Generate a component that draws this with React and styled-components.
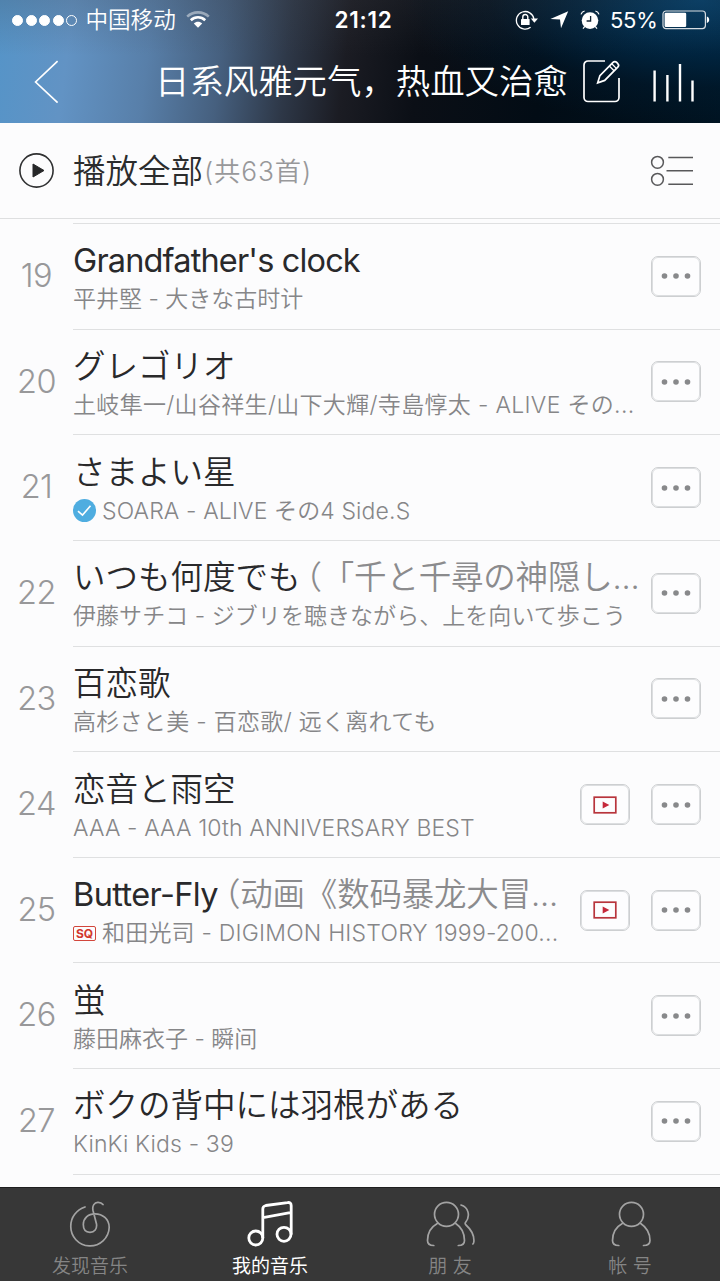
import React from 'react'
import styled, { createGlobalStyle } from 'styled-components';

const GlobalStyle = createGlobalStyle`
    * {
        box-sizing: border-box;
    }
    body {
        margin: 0;
        background: #fcfcfd;
        font-family: Inter, "Noto Sans CJK SC", sans-serif;
        text-spacing-trim: space-all;
    }
    svg {
        display: block;
        flex: none;
    }
`

const Screen = styled.div`
    width: 720px;
    height: 1281px;
    display: flex;
    flex-direction: column;
    overflow: hidden;
    background: #fcfcfd;
`

const Header = styled.header`
    height: 123px;
    flex: none;
    color: #fff;
    background:
        linear-gradient(180deg, rgba(60, 62, 68, 0.2) 0%, rgba(60, 62, 68, 0) 45%),
        radial-gradient(ellipse 300px 125px at 700px 0, #003f6c 0%, rgba(0, 48, 84, 0.65) 40%, rgba(0, 38, 68, 0.25) 70%, rgba(0, 30, 55, 0) 100%),
        linear-gradient(97deg, #5594c8 0%, #6293c4 10%, #587fa9 21%, #46607f 31%, #2e3848 40%, #1b1c23 48%, #0b0f16 58%, #020c15 75%, #001321 100%);
`

const StatusBar = styled.div`
    display: flex;
    align-items: center;
    height: 40px;
    padding: 0 10px 0 12px;
`

const Signal = styled.div`
    display: flex;
    gap: 2.6px;
`

const Dot = styled.span`
    width: 11px;
    height: 11px;
    border-radius: 50%;
    border: 1px solid #fff;
    background: ${({ $on }) => ($on ? '#fff' : 'transparent')};
`

const Carrier = styled.span`
    width: 101px;
    margin-left: 8px;
    font-size: 22.6px;
    font-weight: 350;
    line-height: 30px;
    white-space: nowrap;
`

const Clock = styled.span`
    width: 62px;
    margin-left: 124px;
    font-size: 22.5px;
    font-weight: 600;
    line-height: 30px;
    letter-spacing: 0.8px;
    white-space: nowrap;
`

const StatusIcons = styled.div`
    display: flex;
    align-items: center;
    gap: 11px;
    margin-left: auto;
`

const Percent = styled.span`
    width: 41px;
    margin-left: -1px;
    font-size: 22px;
    line-height: 30px;
    letter-spacing: -0.3px;
`

const NavBar = styled.div`
    display: flex;
    align-items: center;
    height: 83px;
    padding: 0 25px 0 34px;
`

const NavTitle = styled.h1`
    width: 428px;
    margin: 1px 0 0 95px;
    font-size: 34.4px;
    font-weight: 350;
    line-height: 44px;
    white-space: nowrap;
`

const NavActions = styled.div`
    display: flex;
    flex: 1;
    justify-content: space-between;
    align-items: center;
`

const PlayAllBar = styled.div`
    display: flex;
    align-items: center;
    height: 96px;
    flex: none;
    padding: 0 26px 0 18px;
    border-bottom: 1px solid #dedfe0;
`

const PlayAll = styled.span`
    margin: 2px 0 0 18px;
    font-size: 32.5px;
    font-weight: 350;
    line-height: 44px;
    color: #2b2c2d;
`

const Count = styled.span`
    margin: 2px 0 0 1px;
    flex: 1;
    font-size: 26.3px;
    font-weight: 350;
    line-height: 44px;
    letter-spacing: 0.9px;
    color: #98989a;
`

const List = styled.main`
    flex: 1;
    min-height: 0;
    padding-top: 4px;
    overflow: hidden;
`

const Row = styled.div`
    display: flex;
    height: 105.65px;
`

const Index = styled.div`
    width: 73px;
    flex: none;
    font-size: 32.5px;
    font-weight: 350;
    line-height: 106px;
    letter-spacing: -0.5px;
    text-align: center;
    color: #98989a;
`

const RowBody = styled.div`
    display: flex;
    flex: 1;
    min-width: 0;
    align-items: center;
    padding-right: 19px;
    border-top: 1px solid #dfe0e1;
`

const Texts = styled.div`
    flex: 1;
    min-width: 0;
    padding-top: 6px;
`

const Line = styled.div`
    display: flex;
    align-items: center;
    white-space: pre;
    letter-spacing: ${({ $track }) => $track || 0}px;
`

const Title = styled(Line)`
    height: 40px;
    font-size: 32.5px;
    font-weight: ${({ $latin }) => ($latin ? 400 : 350)};
    line-height: 40px;
    color: #29292b;
`

const Alias = styled.span`
    margin-left: ${({ $shift }) => $shift || 0}px;
    font-weight: 350;
    color: #8b8b8d;
    letter-spacing: -0.2px;
`

const Artist = styled(Line)`
    height: 36px;
    font-size: 23px;
    font-weight: 350;
    line-height: 36px;
    color: #868688;
`

const BadgeSlot = styled.span`
    width: 29px;
    flex: none;
`

const SqBadge = styled.span`
    display: flex;
    align-items: center;
    justify-content: center;
    width: 23px;
    height: 15px;
    border: 1px solid #d2463c;
    border-radius: 2px;
    font-size: 12px;
    font-weight: 700;
    line-height: 13px;
    letter-spacing: 0;
    color: #d2382d;
`

const IconButton = styled.button`
    display: flex;
    align-items: center;
    justify-content: center;
    width: 50px;
    height: 41px;
    flex: none;
    margin-left: ${({ $gap }) => $gap || 0}px;
    padding: 0;
    background: #fdfdfe;
    border: 1.5px solid #cdcfd1;
    outline: 0.5px solid #dcdee0;
    outline-offset: -2px;
    border-radius: 7px;
`

const EndLine = styled.div`
    height: 1px;
    margin-left: 73px;
    background: #dfe0e1;
`

const TabBar = styled.nav`
    display: grid;
    grid-template-columns: repeat(4, 1fr);
    height: 94px;
    flex: none;
    background: #373737;
    border-top: 1px solid #1f1f1f;
`

const Tab = styled.div`
    display: flex;
    flex-direction: column;
    align-items: center;
    padding-top: 13px;
    color: ${({ $active }) => ($active ? '#fff' : '#a3a3a3')};
`

const TabLabel = styled.span`
    margin-top: 7px;
    font-size: 19px;
    font-weight: ${({ $active }) => ($active ? 400 : 350)};
    line-height: 26px;
    white-space: pre;
    color: ${({ $active }) => ($active ? '#fff' : '#858585')};
`

const WifiIcon = () => (
    <svg width="24" height="18" viewBox="0 0 24 18" fill="none">
        <path d="M1.2 5.6C7.2 0 16.8 0 22.8 5.6" stroke="#fff" strokeOpacity=".45" strokeWidth="2.6" />
        <path d="M4.8 9.2C9 5.3 15 5.3 19.2 9.2" stroke="#fff" strokeWidth="2.6" />
        <path d="M12 16.8L7.8 12.5C10.2 10.3 13.8 10.3 16.2 12.5Z" fill="#fff" />
    </svg>
)

const LockIcon = () => (
    <svg width="24" height="20" viewBox="0 0 24 20" fill="none" stroke="#fff">
        <path d="M15.6 17.3A8.8 8.8 0 1 1 18.9 9" strokeWidth="1.3" />
        <path d="M15.8 8.6H23L19.4 12.8Z" fill="#fff" stroke="none" />
        <rect x="6" y="9" width="8.6" height="6" rx=".6" fill="#fff" stroke="none" />
        <path d="M7.8 9V7a2.5 2.5 0 0 1 5 0V9" strokeWidth="1.4" />
    </svg>
)

const ArrowIcon = () => (
    <svg width="19" height="18" viewBox="0 0 19 18">
        <path d="M18.2 .3L11 17.3L10 8.6L.4 8Z" fill="#fff" />
    </svg>
)

const AlarmIcon = () => (
    <svg width="20" height="20" viewBox="0 0 20 20" fill="none">
        <circle cx="10" cy="10.6" r="8.3" fill="#fff" />
        <path d="M10.6 6V11H6.6" stroke="#132535" strokeWidth="1.3" />
        <path d="M1 4.4C1.5 2.8 2.6 1.5 4.6 1M19 4.4C18.5 2.8 17.4 1.5 15.4 1M4.6 16.6L3 18.6M15.4 16.6L17 18.6" stroke="#fff" strokeWidth="1.2" />
    </svg>
)

const BatteryIcon = () => (
    <svg width="48" height="20" viewBox="0 0 48 20">
        <rect x="1" y="1" width="42.4" height="17.6" rx="3" fill="none" stroke="#d7dde2" strokeWidth="1.2" />
        <rect x="2.6" y="2.7" width="21.6" height="14.2" rx="1.2" fill="#fff" />
        <path d="M44.8 6.6C48 7.2 48 12.4 44.8 13Z" fill="#fff" />
    </svg>
)

const BackIcon = () => (
    <svg width="26" height="44" viewBox="0 0 26 44" fill="none">
        <path d="M23.6 1.2L1.6 22L23.6 42.6" stroke="#fff" strokeWidth="1.7" />
    </svg>
)

const EditIcon = () => (
    <svg width="39" height="44" viewBox="0 0 39 44" fill="none" stroke="#fff" strokeWidth="1.7">
        <path d="M22 1H5A4 4 0 0 0 1 5V37.5A4 4 0 0 0 5 41.5H32A4 4 0 0 0 36 37.5V18" />
        <path d="M14.7 22.8L16.9 15.6L30 2.4A2.6 2.6 0 0 1 33.7 2.4L34.8 3.6A2.6 2.6 0 0 1 34.8 7.2L21.7 20.4Z" />
        <path d="M26.3 6L31.3 11M28.8 3.7L33.5 8.6" strokeWidth="1.3" />
    </svg>
)

const PlayingIcon = () => (
    <svg width="42" height="44" viewBox="0 0 42 44" stroke="#fff" strokeWidth="2.4">
        <path d="M1.6 10.5V41.5M14.4 15V41.5M27 4V41.5M39.5 20.5V41.5" />
    </svg>
)

const PlayIcon = () => (
    <svg width="37" height="37" viewBox="0 0 37 37">
        <circle cx="18.5" cy="18.5" r="16.6" fill="none" stroke="#303132" strokeWidth="1.6" />
        <path d="M15 12L26 18.5L15 25Z" fill="#262728" stroke="#262728" strokeLinejoin="round" />
    </svg>
)

const SelectIcon = () => (
    <svg width="44" height="32" viewBox="0 0 44 32" fill="none" stroke="#58585a" strokeWidth="1.5">
        <circle cx="7.5" cy="7.3" r="5.9" />
        <circle cx="7.5" cy="24.3" r="5.9" />
        <path d="M18.3 2.4H43M16.5 15.7H43M18.3 29.2H43" />
    </svg>
)

const DotsIcon = () => (
    <svg width="30" height="8" viewBox="0 0 30 8" fill="#88898b">
        <circle cx="3.5" cy="4" r="2.8" />
        <circle cx="15" cy="4" r="2.8" />
        <circle cx="26.5" cy="4" r="2.8" />
    </svg>
)

const MvIcon = () => (
    <svg width="24" height="18" viewBox="0 0 24 18">
        <rect x="1.2" y="1.2" width="21.6" height="15.6" fill="none" stroke="#b8353c" strokeWidth="1.7" />
        <path d="M9.7 5.5L16.3 9L9.7 12.5Z" fill="#c5283a" />
    </svg>
)

const VerifiedIcon = () => (
    <svg width="24" height="24" viewBox="0 0 24 24">
        <circle cx="11.5" cy="11.5" r="11.5" fill="#4fade0" />
        <path d="M5 12.1L9.5 16.1L17.5 6.8" fill="none" stroke="#fff" strokeWidth="1.6" />
    </svg>
)

const DiscoverIcon = () => (
    <svg width="42" height="46" viewBox="0 0 42 46" fill="none" stroke="currentColor" strokeWidth="1.7" strokeLinecap="round">
        <path d="M16 6C7.5 9 1.8 16 1.8 25A19.2 19.2 0 0 0 40.2 26.5C40.2 18 33.5 12.8 26 12.8C19 12.8 14.3 17.5 14.3 23.5C14.3 28.5 17 31.3 21 31.3C25.5 31.3 28.2 28 27.5 23L24 9.5C23 4.5 25.5 1.5 28.8 1.3C31.3 1.2 33 2.2 34 3.5" />
    </svg>
)

const MusicIcon = () => (
    <svg width="46" height="46" viewBox="0 0 46 46" fill="none" stroke="currentColor" strokeWidth="2.8">
        <circle cx="8.8" cy="37" r="7" />
        <circle cx="37" cy="33.3" r="7" />
        <path d="M15.8 37V8C15.8 6 17 4.9 18.8 4.5L40.5 1.6C43 1.2 44.2 2.4 44.2 4.7V33.5M16 16.6L44.5 11.3" />
    </svg>
)

const FriendsIcon = () => (
    <svg width="50" height="46" viewBox="0 0 50 46" fill="none" stroke="currentColor" strokeWidth="1.7" strokeLinecap="round">
        <circle cx="21.5" cy="13.3" r="12" />
        <path d="M12.3 22.5C6 26 2.5 32.5 2.5 39.5C2.5 43 4.5 44.5 8.8 44.5M30.7 22.5C36 26 39.5 32.5 39.5 39.5C39.5 43 37.5 44.5 33.3 44.5M36 4C43 6 46 14.5 40.5 21.5C39.9 22.4 40.1 23.2 41 24C46 28.5 49.3 34 48.9 40.5C48.8 41.8 48.4 42.5 47.9 43" />
    </svg>
)

const AccountIcon = () => (
    <svg width="42" height="46" viewBox="0 0 42 46" fill="none" stroke="currentColor" strokeWidth="1.7" strokeLinecap="round">
        <circle cx="22.5" cy="13.3" r="12" />
        <path d="M13.3 22.5C7 26 3.5 32.5 3.5 39.5C3.5 43 5.5 44.5 9.8 44.5M31.7 22.5C37 26 41 32.5 41 39.5C41 43 39 44.5 34.5 44.5" />
    </svg>
)

const songs = [
    { id: 19, title: "Grandfather's clock", titleTrack: -0.85, latin: true, artist: '平井堅 - 大きな古时计' },
    { id: 20, title: 'グレゴリオ', artist: '土岐隼一/山谷祥生/山下大輝/寺島惇太 - ALIVE その...', artistTrack: 0.32 },
    { id: 21, title: 'さまよい星', artist: 'SOARA - ALIVE その4 Side.S', artistTrack: 0.12, badge: 'verified' },
    { id: 22, title: 'いつも何度でも', alias: '（「千と千尋の神隠し...', aliasShift: -11, artist: '伊藤サチコ - ジブリを聴きながら、上を向いて歩こう', artistTrack: 0.05 },
    { id: 23, title: '百恋歌', artist: '高杉さと美 - 百恋歌/ 远く离れても', artistTrack: 0.3 },
    { id: 24, title: '恋音と雨空', artist: 'AAA - AAA 10th ANNIVERSARY BEST', artistTrack: 0.1, mv: true },
    { id: 25, title: 'Butter-Fly', titleTrack: -0.6, latin: true, alias: '（动画《数码暴龙大冒...', aliasShift: -10, artist: '和田光司 - DIGIMON HISTORY 1999-200...', artistTrack: 0.2, badge: 'sq', mv: true },
    { id: 26, title: '蛍', artist: '藤田麻衣子 - 瞬间' },
    { id: 27, title: 'ボクの背中には羽根がある', artist: 'KinKi Kids - 39', artistTrack: 0.15 },
]

const tabs = [
    { label: '发现音乐', icon: <DiscoverIcon /> },
    { label: '我的音乐', icon: <MusicIcon />, active: true },
    { label: '朋 友', icon: <FriendsIcon /> },
    { label: '帐 号', icon: <AccountIcon /> },
]

function SongRow({ song }) {
    return (
        <Row>
            <Index>{song.id}</Index>
            <RowBody>
                <Texts>
                    <Title $track={song.titleTrack} $latin={song.latin}>
                        <span>{song.title}</span>
                        {song.alias && <Alias $shift={song.aliasShift}>{song.alias}</Alias>}
                    </Title>
                    <Artist $track={song.artistTrack}>
                        {song.badge &&
                            <BadgeSlot>
                                {song.badge === 'sq' ? <SqBadge>SQ</SqBadge> : <VerifiedIcon />}
                            </BadgeSlot>
                        }
                        <span>{song.artist}</span>
                    </Artist>
                </Texts>
                {song.mv && <IconButton><MvIcon /></IconButton>}
                <IconButton $gap={song.mv ? 21 : 0}><DotsIcon /></IconButton>
            </RowBody>
        </Row>
    )
}

export default function App() {
    return (
        <>
            <GlobalStyle />
            <Screen>
                <Header>
                    <StatusBar>
                        <Signal>
                            {[1, 2, 3, 4, 5].map((n) => <Dot key={n} $on={n < 5} />)}
                        </Signal>
                        <Carrier>中国移动</Carrier>
                        <WifiIcon />
                        <Clock>21:12</Clock>
                        <StatusIcons>
                            <LockIcon />
                            <ArrowIcon />
                            <AlarmIcon />
                            <Percent>55%</Percent>
                            <BatteryIcon />
                        </StatusIcons>
                    </StatusBar>
                    <NavBar>
                        <BackIcon />
                        <NavTitle>日系风雅元气，热血又治愈</NavTitle>
                        <NavActions>
                            <EditIcon />
                            <PlayingIcon />
                        </NavActions>
                    </NavBar>
                </Header>
                <PlayAllBar>
                    <PlayIcon />
                    <PlayAll>播放全部</PlayAll>
                    <Count>(共63首)</Count>
                    <SelectIcon />
                </PlayAllBar>
                <List>
                    {songs.map((song) => <SongRow key={song.id} song={song} />)}
                    <EndLine />
                </List>
                <TabBar>
                    {tabs.map((tab) => (
                        <Tab key={tab.label} $active={tab.active}>
                            {tab.icon}
                            <TabLabel $active={tab.active}>{tab.label}</TabLabel>
                        </Tab>
                    ))}
                </TabBar>
            </Screen>
        </>
    )
}
